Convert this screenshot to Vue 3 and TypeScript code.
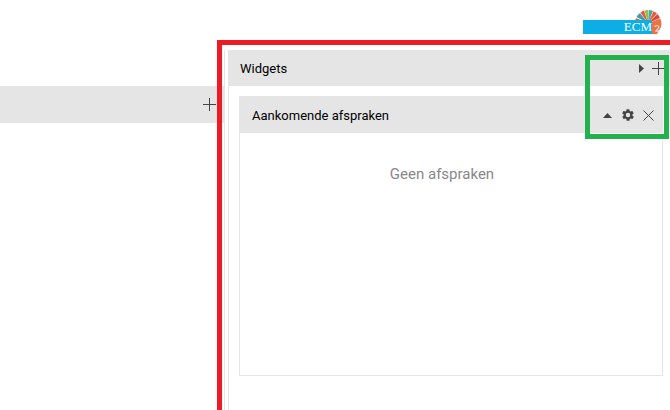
<template>
  <div class="page">
    <header class="top">
      <div class="logo">
        <svg class="logo__mark" width="30" height="28" viewBox="0 0 30 28">
          <path d="M15 15 L2 17 A13 13 0 0 1 3 10Z" fill="#e8663c" />
          <path d="M15 15 L3.500 9 A13 13 0 0 1 7 5Z" fill="#3f9fa8" />
          <path d="M15 15 L7.500 4.500 A13 13 0 0 1 11 2.600Z" fill="#e9573f" />
          <path d="M15 15 L11.500 2.500 A13 13 0 0 1 15.500 2Z" fill="#8fbf4d" />
          <path d="M15 15 L16 2 A13 13 0 0 1 20 3Z" fill="#4aa8a0" />
          <path d="M15 15 L20.500 3.200 A13 13 0 0 1 24 5.600Z" fill="#ee5a36" />
          <path d="M15 15 L24.500 6 A13 13 0 0 1 27 10Z" fill="#d9473f" />
          <path d="M15 15 L27.300 10.500 A13 13 0 0 1 28 19 L24 26 H15Z" fill="#ef7040" />
          <path d="M21.500 18.500 Q25.500 16.500 26 19 Q25.500 21 22.500 23 H26.500" fill="none" stroke="#fff" stroke-width="1" />
        </svg>
        <span class="logo__bar">ECM</span>
      </div>
    </header>

    <main class="columns">
      <aside class="side">
        <div class="bar bar--side">
          <svg class="icon" width="13" height="13" viewBox="0 0 13 13"><path d="M6.500 0V13M0 6.500H13" /></svg>
        </div>
      </aside>

      <section class="widgets">
        <div class="bar bar--widgets">
          <span>Widgets</span>
          <div class="bar__actions">
            <svg width="5" height="9" viewBox="0 0 5 9"><path class="solid" d="M0 0L5 4.500L0 9Z" /></svg>
            <svg class="icon" width="13" height="13" viewBox="0 0 13 13"><path d="M6.500 0V13M0 6.500H13" /></svg>
          </div>
        </div>

        <article v-for="w in items" :key="w.title" class="card">
          <div class="card__head">
            <span>{{ w.title }}</span>
            <div class="card__actions">
              <svg class="card__toggle" width="9" height="5" viewBox="0 0 9 5"><path class="solid" d="M4.500 0L9 5H0Z" /></svg>
              <svg width="14" height="14" viewBox="0 0 24 24"><path class="solid" d="M19.400 13c.1-.3.1-.7.1-1s0-.7-.1-1l2.100-1.600c.2-.2.2-.4.1-.6l-2-3.500c-.1-.2-.4-.3-.6-.2l-2.500 1c-.5-.4-1.100-.7-1.700-1l-.4-2.600c0-.3-.2-.5-.5-.5h-4c-.3 0-.5.2-.5.400l-.4 2.700c-.6.2-1.200.6-1.700 1l-2.500-1c-.2-.1-.5 0-.6.2l-2 3.500c-.1.200-.1.400.1.600L4.600 11c-.1.300-.1.700-.1 1s0 .7.100 1l-2.100 1.600c-.2.200-.2.400-.1.600l2 3.500c.1.200.4.300.6.200l2.500-1c.5.400 1.100.700 1.700 1l.4 2.600c0 .3.2.5.5.5h4c.3 0 .5-.2.5-.4l.4-2.700c.6-.2 1.200-.6 1.700-1l2.500 1c.2.100.5 0 .6-.2l2-3.500c.1-.2.1-.4-.1-.6ZM12 15.800A3.800 3.800 0 1 1 12 8.200a3.800 3.800 0 0 1 0 7.600Z" /></svg>
              <svg class="icon" width="11" height="11" viewBox="0 0 11 11"><path d="M.5.500L10.500 10.500M10.500.500L.5 10.500" /></svg>
            </div>
          </div>
          <div class="card__body">{{ w.empty }}</div>
        </article>
      </section>
    </main>

    <div class="mark mark--red"></div>
    <div class="mark mark--green"></div>
  </div>
</template>

<script setup lang="ts">
interface WidgetItem {
  title: string
  empty: string
}

const items: WidgetItem[] = [
  { title: 'Aankomende afspraken', empty: 'Geen afspraken' }
]
</script>

<style>
html,
body {
  margin: 0;
  background: #fff;
  overflow: hidden;
}
</style>

<style scoped>
.page {
  position: relative;
  width: 670px;
  height: 410px;
  overflow: hidden;
  font-family: Roboto, "Liberation Sans", sans-serif;
  font-size: 13px;
  color: #000;
}

.top {
  height: 50px;
}

.logo {
  position: relative;
  width: 670px;
  height: 50px;
}

.logo__bar {
  position: absolute;
  left: 583px;
  top: 20px;
  width: 69px;
  height: 14px;
  box-sizing: border-box;
  background: #0daee6;
  color: #fff;
  font-family: "Liberation Serif", serif;
  font-size: 13px;
  line-height: 14px;
  text-align: right;
  white-space: nowrap;
}

.logo__mark {
  position: absolute;
  left: 633px;
  top: 8px;
}

.columns {
  display: flex;
  height: 360px;
}

.side {
  width: 225px;
  flex: none;
  box-sizing: border-box;
  padding-top: 36px;
  border-right: 1px solid #e5e5e5;
}

.bar {
  display: flex;
  align-items: center;
  justify-content: space-between;
  background: #e5e5e5;
}

.bar--side {
  height: 37px;
  justify-content: flex-end;
  padding-right: 8px;
}

.widgets {
  margin-left: 3px;
  width: 442px;
  flex: none;
  border-left: 1px solid #e5e5e5;
}

.bar--widgets {
  height: 36px;
  margin-left: -1px;
  padding: 0 6px 0 12px;
}

.bar__actions,
.card__actions {
  display: flex;
  align-items: center;
}

.bar__actions {
  gap: 8px;
}

.card__actions {
  gap: 8px;
}

.card__toggle {
  margin-right: 1px;
}

.card {
  margin: 10px 0 0 10px;
  width: 424px;
  height: 280px;
  border: 1px solid #e5e5e5;
  border-top: 0;
  box-sizing: border-box;
  display: flex;
  flex-direction: column;
}

.card__head {
  height: 37px;
  margin: 0 -1px;
  padding: 1px 9px 0 13px;
  box-sizing: border-box;
  flex: none;
  display: flex;
  align-items: center;
  justify-content: space-between;
  background: #e5e5e5;
}

.card__body {
  padding: 32px 18px 0 0;
  text-align: center;
  font-size: 15px;
  color: #888;
}

.icon path {
  fill: none;
  stroke: #444;
  stroke-width: 1;
}

.solid {
  fill: #444;
}

.mark {
  position: absolute;
  box-sizing: border-box;
  pointer-events: none;
}

.mark--red {
  left: 217px;
  top: 40px;
  width: 470px;
  height: 400px;
  border: 5px solid #ed1c24;
}

.mark--green {
  left: 585px;
  top: 55px;
  width: 84px;
  height: 84px;
  border: 5px solid #22b14c;
}
</style>
